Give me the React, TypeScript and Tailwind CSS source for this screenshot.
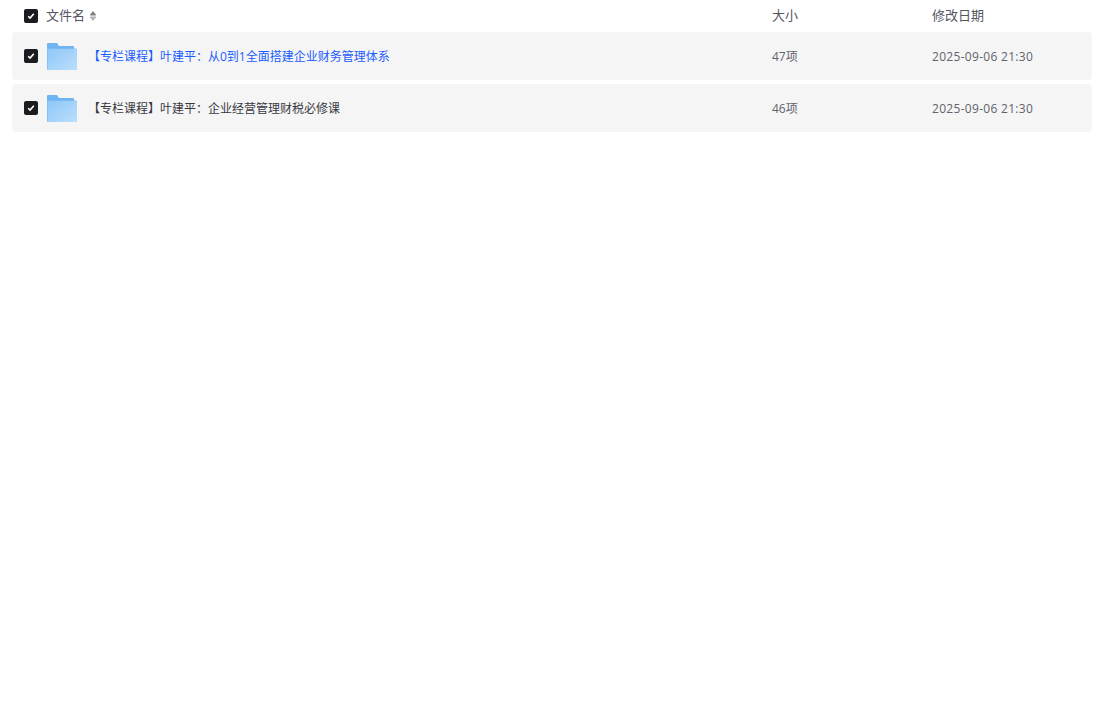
import React from "react";

const font = { fontFamily: '"Open Sans", "Noto Sans CJK SC", sans-serif' };

function Check() {
  return (
    <span className="flex h-[14px] w-[14px] shrink-0 items-center justify-center rounded-[2px] bg-[#1c1c20]">
      <svg width="8" height="8" viewBox="0 0 8 8" fill="none">
        <path d="M1.2 4.2 L3.1 6.1 L6.8 1.8" stroke="#fff" strokeWidth="1.6" />
      </svg>
    </span>
  );
}

function Folder() {
  return (
    <svg width="30" height="27" viewBox="0 0 30 27" className="mt-px shrink-0">
      <defs>
        <linearGradient id="fg" x1="0" y1="0" x2="1" y2="1">
          <stop offset="0" stopColor="#8ec8f8" />
          <stop offset="1" stopColor="#bcdefc" />
        </linearGradient>
      </defs>
      <path d="M0 1 Q0 0 1 0 H10 L12 3 H26 Q27 3 27 4 V8 H0 Z" fill="#6fb5f2" />
      <path d="M0 5.5 H29 Q30 5.5 30 6.5 V26 Q30 27 29 27 H1 Q0 27 0 26 Z" fill="#85c0f5" />
      <path d="M1 6 H29 Q30 6 30 7 V26 Q30 27 29 27 H2 Q1 27 1 26 Z" fill="url(#fg)" />
      <rect x="21" y="7.5" width="5" height="3" fill="#a3cff6" />
    </svg>
  );
}

function Row({ name, size, blue }: { name: string; size: string; blue?: boolean }) {
  return (
    <div className="flex h-12 items-center rounded-[4px] bg-[#f5f5f5] pl-3">
      <Check />
      <div className="ml-[9px] w-[30px]">
        <Folder />
      </div>
      <div className={`ml-[11px] mt-[2px] w-[684px] text-xs ${blue ? "text-[#1a5cff]" : "text-[#383842]"}`}>{name}</div>
      <div className="mt-[2px] w-[160px] text-xs text-[#62626c]">{size}</div>
      <div className="mt-[2px] text-xs tracking-[0.3px] text-[#62626c]">2025-09-06 21:30</div>
    </div>
  );
}

export default function App() {
  return (
    <div className="min-h-[727px] bg-white px-3" style={font}>
      <div className="flex h-8 items-center pl-3 text-[13px] text-[#55555f]">
        <Check />
        <div className="ml-2 flex w-[726px] items-center gap-1">
          <span>文件名</span>
          <svg width="8" height="12" viewBox="0 0 8 12">
            <path d="M4 1 L7 4.8 Q7.2 5.5 6.5 5.5 H1.5 Q0.8 5.5 1 4.8 Z" fill="#808086" />
            <path d="M4 11 L7 7.2 Q7.2 6.5 6.5 6.5 H1.5 Q0.8 6.5 1 7.2 Z" fill="#b4b4b8" />
          </svg>
        </div>
        <div className="w-[160px]">大小</div>
        <div>修改日期</div>
      </div>
      <div className="flex w-[1080px] flex-col gap-1">
        <Row name="【专栏课程】叶建平：从0到1全面搭建企业财务管理体系" size="47项" blue />
        <Row name="【专栏课程】叶建平：企业经营管理财税必修课" size="46项" />
      </div>
    </div>
  );
}
